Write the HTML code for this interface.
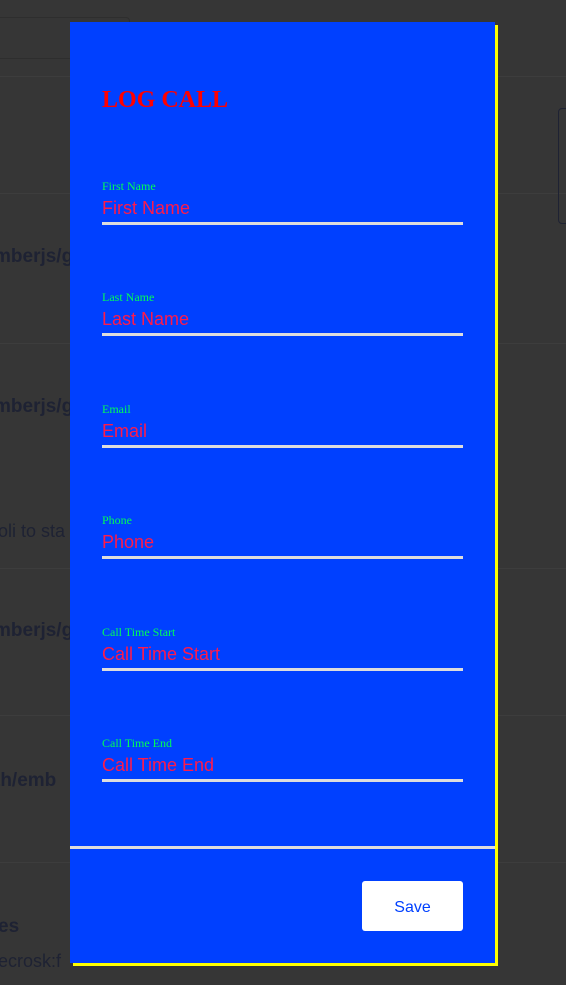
<!DOCTYPE html>
<html><head><meta charset="utf-8"><style>
*{margin:0;padding:0;box-sizing:border-box}
body{width:566px;height:985px;background:#363636;position:relative;overflow:hidden;font-family:"Liberation Sans",sans-serif}
.bg{position:absolute;color:#1e2233;font-weight:bold;font-size:19px}
.line{position:absolute;left:0;width:566px;height:1px;background:#3d3d3d}
.modal{position:absolute;left:70px;top:22px;width:425px;height:941px;background:#0040ff;box-shadow:3px 3px 0 #ffff00}
h1{position:absolute;left:32px;top:65px;font-family:"Liberation Serif",serif;font-weight:bold;font-size:24px;color:#ff0000}
.f{position:absolute;left:32px;width:361px}
.f label{display:block;font-family:"Liberation Serif",serif;font-size:12px;color:#00ff55;height:12px;line-height:12px}
.f div{font-size:18px;color:#ff1a4a;line-height:22px;margin-top:5px;height:28px;border-bottom:3px solid #ddd}
.div{position:absolute;left:0;top:824px;width:425px;height:3px;background:#ddd}
.btn{position:absolute;left:292px;top:859px;width:101px;height:50px;background:#fff;border-radius:3px;color:#0040ff;font-size:16px;text-align:center;line-height:53px}
</style></head><body>
<div style="position:absolute;left:-5px;top:17px;width:135px;height:42px;border:1px solid #2e2e2e;border-radius:4px"></div>
<div class="line" style="top:76px"></div>
<div class="line" style="top:193px"></div>
<div class="line" style="top:343px"></div>
<div class="line" style="top:568px"></div>
<div class="line" style="top:715px"></div>
<div class="line" style="top:862px"></div>
<div style="position:absolute;left:558px;top:108px;width:20px;height:116px;border:1px solid #1e2233;border-radius:4px"></div>
<div class="bg" style="left:-6px;top:246px">mberjs/g</div>
<div class="bg" style="left:-6px;top:396px">mberjs/g</div>
<div class="bg" style="left:-2px;top:521px;font-weight:normal;font-size:18px">oli to sta</div>
<div class="bg" style="left:-6px;top:620px">mberjs/g</div>
<div class="bg" style="left:-6px;top:770px">th/emb</div>
<div class="bg" style="left:-2px;top:916px">es</div>
<div class="bg" style="left:-2px;top:951px;font-weight:normal;font-size:18px">ecrosk:f</div>
<div class="modal">
<h1>LOG CALL</h1>
<div class="f" style="top:158px"><label>First Name</label><div>First Name</div></div>
<div class="f" style="top:269px"><label>Last Name</label><div>Last Name</div></div>
<div class="f" style="top:381px"><label>Email</label><div>Email</div></div>
<div class="f" style="top:492px"><label>Phone</label><div>Phone</div></div>
<div class="f" style="top:604px"><label>Call Time Start</label><div>Call Time Start</div></div>
<div class="f" style="top:715px"><label>Call Time End</label><div>Call Time End</div></div>
<div class="div"></div>
<div class="btn">Save</div>
</div>
</body></html>
